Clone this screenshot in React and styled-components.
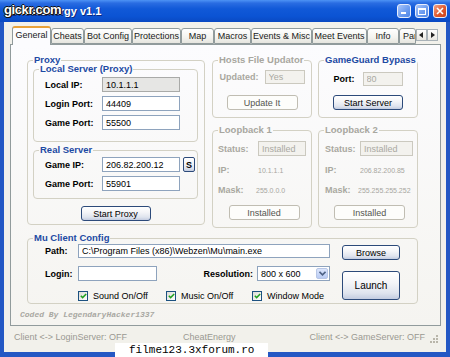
import styled, { createGlobalStyle } from "styled-components";

const GlobalStyle = createGlobalStyle`
  body { margin: 0; background: #fff; font-family: "Liberation Sans", Arial, sans-serif; }
`;

const tabs = [
  ["General", 39], ["Cheats", 33], ["Bot Config", 48], ["Protections", 49], ["Map", 33],
  ["Macros", 37], ["Events & Misc", 61], ["Meet Events", 55], ["Info", 32], ["Party", 17],
];

export default function App() {
  return (
    <Window>
      <GlobalStyle />
      <TitleBar>
        <TitleText>CheatEnergy v1.1</TitleText>
        <Controls>
          <CtlButton><MinBar /></CtlButton>
          <CtlButton><MaxBox /></CtlButton>
          <CtlButton $close>
            <svg width="8" height="8" viewBox="0 0 8 8"><path d="M1 1L7 7M7 1L1 7" stroke="#fff" strokeWidth="1.6" /></svg>
          </CtlButton>
        </Controls>
      </TitleBar>
      <SiteMark>gickr.com</SiteMark>

      <Body>
        <TabStrip>
          {tabs.map(([name, w], i) => (
            <Tab key={name} $w={w} $active={i === 0}>{name}</Tab>
          ))}
          <Arrows>
            <Arrow><svg width="5" height="6" viewBox="0 0 5 6"><path d="M4 0L0 3L4 6Z" fill="#222" /></svg></Arrow>
            <Arrow><svg width="5" height="6" viewBox="0 0 5 6"><path d="M1 0L5 3L1 6Z" fill="#222" /></svg></Arrow>
          </Arrows>
        </TabStrip>

        <Panel>
          <TopSection>
            <Group $w={178} $h={170}>
              <Legend>Proxy</Legend>
              <GroupBody $pad="0 6px 3px 5px">
                <Group $mt={-1}>
                  <Legend>Local Server (Proxy)</Legend>
                  <Rows $pad="3px 0 11px 11px" $gap={4}>
                    <Row><FieldLabel $w={57}>Local IP:</FieldLabel><TextBox $w={78} $read defaultValue="10.1.1.1" readOnly /></Row>
                    <Row><FieldLabel $w={57}>Login Port:</FieldLabel><TextBox $w={78} defaultValue="44409" readOnly /></Row>
                    <Row><FieldLabel $w={57}>Game Port:</FieldLabel><TextBox $w={78} defaultValue="55500" readOnly /></Row>
                  </Rows>
                </Group>
                <Group $mt={3}>
                  <Legend>Real Server</Legend>
                  <Rows $pad="2px 0 7px 11px" $gap={4}>
                    <Row>
                      <FieldLabel $w={57}>Game IP:</FieldLabel>
                      <TextBox $w={78} defaultValue="206.82.200.12" readOnly />
                      <SmallButton>S</SmallButton>
                    </Row>
                    <Row><FieldLabel $w={57}>Game Port:</FieldLabel><TextBox $w={78} defaultValue="55901" readOnly /></Row>
                  </Rows>
                </Group>
                <Center $mt={7}><Button $w={70}>Start Proxy</Button></Center>
              </GroupBody>
            </Group>

            <SideGrid>
              <Group $h={63}>
                <Legend $off>Hosts File Updator</Legend>
                <Rows $pad="4px 0 0 0" $center>
                  <Row>
                    <FieldLabel $w={45} $off>Updated:</FieldLabel>
                    <TextBox $w={40} $h={14} $off defaultValue="Yes" readOnly />
                  </Row>
                  <Button $w={71} $off $mt={11}>Update It</Button>
                </Rows>
              </Group>
              <Group $h={63}>
                <Legend>GameGuard Bypass</Legend>
                <Rows $pad="6px 0 0 0" $center>
                  <Row>
                    <FieldLabel $w={29}>Port:</FieldLabel>
                    <TextBox $w={40} $h={14} $off defaultValue="80" readOnly />
                  </Row>
                  <Button $w={70} $mt={9}>Start Server</Button>
                </Rows>
              </Group>
              <Loopback title="Loopback 1" pad={5} label={40} ip="10.1.1.1" mask="255.0.0.0" />
              <Loopback title="Loopback 2" pad={6} label={35} ip="206.82.200.85" mask="255.255.255.252" />
            </SideGrid>
          </TopSection>

          <Group $w={391} $h={71} $mt={5}>
            <Legend>Mu Client Config</Legend>
            <MuBody>
              <MuFields>
                <Row>
                  <FieldLabel $w={33}>Path:</FieldLabel>
                  <TextBox $w={252} $h={14} defaultValue={"C:\\Program Files (x86)\\Webzen\\Mu\\main.exe"} readOnly />
                </Row>
                <Row $mt={8}>
                  <FieldLabel $w={33}>Login:</FieldLabel>
                  <TextBox $w={79} defaultValue="" readOnly />
                  <ResLabel>Resolution:</ResLabel>
                  <Select>
                    <span>800 x 600</span>
                    <DropButton>
                      <svg width="7" height="5" viewBox="0 0 7 5"><path d="M0.5 0.8L3.5 3.8L6.5 0.8" stroke="#4d6185" strokeWidth="1.6" fill="none" /></svg>
                    </DropButton>
                  </Select>
                </Row>
                <CheckRow>
                  <Check $w={88}><Box><Tick /></Box>Sound On/Off</Check>
                  <Check $w={86}><Box><Tick /></Box>Music On/Off</Check>
                  <Check><Box><Tick /></Box>Window Mode</Check>
                </CheckRow>
              </MuFields>
              <MuButtons>
                <Button $w={58}>Browse</Button>
                <Button $w={58} $h={29} $big>Launch</Button>
              </MuButtons>
            </MuBody>
          </Group>

          <Credit>Coded By LegendaryHacker1337</Credit>
        </Panel>

        <StatusBar>
          <StatusText $w={169}>Client &lt;-&gt; LoginServer: OFF</StatusText>
          <StatusText>CheatEnergy</StatusText>
          <StatusText $right>Client &lt;-&gt; GameServer: OFF</StatusText>
          <Grip>
            <svg width="8" height="8" viewBox="0 0 8 8" fill="#b9b6aa">
              <rect x="6" y="0" width="2" height="2" /><rect x="6" y="3" width="2" height="2" />
              <rect x="3" y="3" width="2" height="2" /><rect x="6" y="6" width="2" height="2" />
              <rect x="3" y="6" width="2" height="2" /><rect x="0" y="6" width="2" height="2" />
            </svg>
          </Grip>
        </StatusBar>
      </Body>
      <ForumMark>filme123.3xforum.ro</ForumMark>
    </Window>
  );
}

function Loopback({ title, pad, label, ip, mask }) {
  return (
    <Group $h={103}>
      <Legend $off>{title}</Legend>
      <Rows $pad={`6px 0 0 ${pad}px`}>
        <Row><FieldLabel $w={label} $off>Status:</FieldLabel><TextBox $w={label === 40 ? 48 : 53} $off defaultValue="Installed" readOnly /></Row>
        <Row $mt={7} $h={14}><FieldLabel $w={label} $off>IP:</FieldLabel><Value>{ip}</Value></Row>
        <Row $mt={6} $h={14}><FieldLabel $w={label - 2} $off>Mask:</FieldLabel><Value>{mask}</Value></Row>
        <Center $mt={8} $shift={pad === 5 ? -1 : -3}><Button $w={71} $off>Installed</Button></Center>
      </Rows>
    </Group>
  );
}

const Window = styled.div`
  position: relative;
  width: 450px;
  height: 357px;
  overflow: hidden;
  display: flex;
  flex-direction: column;
  background: #2458c4;
  font-family: "Liberation Sans", Arial, sans-serif;
  font-size: 9px;
`;

const TitleBar = styled.div`
  height: 22px;
  flex: none;
  display: flex;
  align-items: center;
  justify-content: space-between;
  padding: 0 3px 0 9px;
  background: linear-gradient(#4d93f5 0%, #2a6ce2 14%, #1159d8 40%, #0b53d3 75%, #0a49c2 100%);
`;

const TitleText = styled.span`
  color: #fff;
  font-weight: bold;
  font-size: 11px;
  text-shadow: 1px 1px 0 #0c2a80;
`;

const SiteMark = styled.div`
  position: absolute;
  left: 4px;
  top: 2px;
  color: #fff;
  font-weight: bold;
  font-size: 13px;
  letter-spacing: -0.4px;
  text-shadow: -1px 0 #111, 1px 0 #111, 0 -1px #111, 0 1px #111, 1px 1px #111;
`;

const Controls = styled.div`
  display: flex;
  gap: 4px;
`;

const CtlButton = styled.div`
  position: relative;
  box-sizing: border-box;
  width: 14px;
  height: 14px;
  border: 1px solid #e8eefc;
  border-radius: 3px;
  display: flex;
  align-items: center;
  justify-content: center;
  background: ${(p) => (p.$close
    ? "linear-gradient(135deg, #f3a489, #e0592f 55%, #c8431b)"
    : "linear-gradient(135deg, #a9c6fa, #6e9df0 55%, #4f86e6)")};
`;

const MinBar = styled.div`
  position: absolute;
  left: 3px;
  bottom: 3px;
  width: 5px;
  height: 2px;
  background: #fff;
`;

const MaxBox = styled.div`
  box-sizing: border-box;
  width: 8px;
  height: 7px;
  border: 1px solid #fff;
  border-top-width: 2px;
`;

const Body = styled.div`
  height: 330px;
  flex: none;
  box-sizing: border-box;
  margin: 0 4px;
  padding: 4px 5px 0 6px;
  background: #f2f1eb;
  display: flex;
  flex-direction: column;
`;

const TabStrip = styled.div`
  position: relative;
  z-index: 2;
  height: 18px;
  flex: none;
  display: flex;
  align-items: flex-end;
  padding-left: 2px;
`;

const Tab = styled.div`
  box-sizing: border-box;
  width: ${(p) => p.$w}px;
  height: ${(p) => (p.$active ? 19 : 16)}px;
  margin-bottom: ${(p) => (p.$active ? -1 : 0)}px;
  flex: none;
  overflow: hidden;
  white-space: nowrap;
  padding-left: ${(p) => (p.$w < 20 ? 3 : 0)}px;
  text-align: ${(p) => (p.$w < 20 ? "left" : "center")};
  line-height: ${(p) => (p.$active ? 15 : 14)}px;
  font-size: 9px;
  color: #1a1a1a;
  border: 1px solid #919b9c;
  border-bottom: ${(p) => (p.$active ? "none" : "1px solid #919b9c")};
  border-top: ${(p) => (p.$active ? "2px solid #e8a23a" : "1px solid #919b9c")};
  border-radius: 3px 3px 0 0;
  background: ${(p) => (p.$active ? "#fcfcfe" : "linear-gradient(#ffffff, #f3f3ef 60%, #e6e5df)")};
`;

const Arrows = styled.div`
  display: flex;
  align-self: flex-start;
  margin: 3px 0 0 0;
`;

const Arrow = styled.div`
  box-sizing: border-box;
  width: 11px;
  height: 12px;
  border: 1px solid #a9b2b8;
  background: linear-gradient(#ffffff, #e8e7e1);
  display: flex;
  align-items: center;
  justify-content: center;
`;

const Panel = styled.div`
  height: 282px;
  flex: none;
  box-sizing: border-box;
  padding: 10px 0 0 16px;
  border: 1px solid #919b9c;
  background: linear-gradient(#fcfcfe, #f5f4f0);
`;

const TopSection = styled.div`
  display: flex;
  align-items: flex-start;
  gap: 7px;
`;

const SideGrid = styled.div`
  display: grid;
  grid-template-columns: 100px 100px;
  grid-template-rows: 63px 103px;
  gap: 7px 6px;
`;

const Group = styled.fieldset`
  box-sizing: border-box;
  margin: ${(p) => p.$mt || 0}px 0 0 0;
  padding: 0;
  min-width: 0;
  width: ${(p) => (p.$w ? `${p.$w}px` : "auto")};
  height: ${(p) => (p.$h ? `${p.$h}px` : "auto")};
  border: 1px solid #d3d1c4;
  border-radius: 4px;
`;

const Legend = styled.legend`
  margin-left: 5px;
  padding: 0 1px;
  font-size: 9.5px;
  font-weight: bold;
  line-height: 10px;
  color: ${(p) => (p.$off ? "#a8a79f" : "#1d4aa3")};
`;

const GroupBody = styled.div`
  padding: ${(p) => p.$pad};
`;

const Rows = styled.div`
  display: flex;
  flex-direction: column;
  align-items: ${(p) => (p.$center ? "center" : "stretch")};
  gap: ${(p) => p.$gap || 0}px;
  padding: ${(p) => p.$pad};
`;

const Row = styled.div`
  display: flex;
  align-items: center;
  height: ${(p) => p.$h || 15}px;
  margin-top: ${(p) => p.$mt || 0}px;
`;

const Center = styled.div`
  display: flex;
  justify-content: center;
  margin-top: ${(p) => p.$mt || 0}px;
  margin-left: ${(p) => p.$shift || 0}px;
`;

const FieldLabel = styled.span`
  width: ${(p) => p.$w}px;
  flex: none;
  font-weight: bold;
  font-size: 9px;
  white-space: nowrap;
  color: ${(p) => (p.$off ? "#a9a8a0" : "#000")};
`;

const TextBox = styled.input`
  box-sizing: border-box;
  width: ${(p) => p.$w}px;
  height: ${(p) => p.$h || 15}px;
  margin: 0;
  padding: 0 3px;
  outline: none;
  font: 9px "Liberation Sans", Arial, sans-serif;
  border: 1px solid ${(p) => (p.$off ? "#cbc9bf" : p.$read ? "#a9aaa8" : "#8ea3bd")};
  background: ${(p) => (p.$off ? "#f3f2ee" : p.$read ? "#e6e6e4" : "#fff")};
  color: ${(p) => (p.$off ? "#aaa9a2" : "#000")};
`;

const Value = styled.span`
  font-size: 7px;
  color: #a7a6a0;
  white-space: nowrap;
`;

const Button = styled.button`
  box-sizing: border-box;
  width: ${(p) => p.$w}px;
  height: ${(p) => p.$h || 15}px;
  margin: ${(p) => p.$mt || 0}px 0 0 0;
  padding: 0;
  flex: none;
  font: ${(p) => (p.$big ? 10 : 9)}px "Liberation Sans", Arial, sans-serif;
  border-radius: 3px;
  border: 1px solid ${(p) => (p.$off ? "#c0bdb2" : "#2c4a7a")};
  background: ${(p) => (p.$off
    ? "#fdfdfb"
    : "linear-gradient(#ffffff, #f4f5f8 40%, #dfe4ee 78%, #c3cce0)")};
  color: ${(p) => (p.$off ? "#55554f" : "#000")};
`;

const SmallButton = styled(Button)`
  width: 12px;
  margin-left: 3px;
  font-weight: bold;
  font-size: 9px;
  border-radius: 2px;
`;

const MuBody = styled.div`
  display: flex;
  align-items: flex-start;
  padding: 0 17px 3px 17px;
`;

const MuFields = styled.div`
  display: flex;
  flex-direction: column;
  width: 285px;
`;

const ResLabel = styled.span`
  flex: 1;
  text-align: right;
  padding-right: 4px;
  font-weight: bold;
  font-size: 9px;
`;

const Select = styled.div`
  box-sizing: border-box;
  width: 73px;
  height: 15px;
  display: flex;
  align-items: center;
  justify-content: space-between;
  padding: 0 1px 0 3px;
  border: 1px solid #8ea3bd;
  background: #fff;
  font-size: 9px;
`;

const DropButton = styled.div`
  box-sizing: border-box;
  width: 12px;
  height: 11px;
  display: flex;
  align-items: center;
  justify-content: center;
  border: 1px solid #b7c6e6;
  border-radius: 2px;
  background: linear-gradient(#dbe5fb, #b9cbf3);
`;

const CheckRow = styled.div`
  display: flex;
  align-items: center;
  height: 10px;
  margin-top: 10px;
  padding-left: 33px;
`;

const Check = styled.div`
  display: flex;
  align-items: center;
  gap: 5px;
  width: ${(p) => (p.$w ? `${p.$w}px` : "auto")};
  font-size: 9px;
  white-space: nowrap;
`;

const Box = styled.div`
  box-sizing: border-box;
  width: 10px;
  height: 10px;
  border: 1px solid #1c5180;
  background: linear-gradient(135deg, #dcdcd6, #fff);
  display: flex;
  align-items: center;
  justify-content: center;
`;

function Tick() {
  return (
    <svg width="7" height="6" viewBox="0 0 7 6">
      <path d="M0.8 2.8L2.6 4.6L6.2 0.9" stroke="#21a121" strokeWidth="1.5" fill="none" />
    </svg>
  );
}

const MuButtons = styled.div`
  display: flex;
  flex-direction: column;
  gap: 11px;
  margin: 2px 0 0 12px;
`;

const Credit = styled.div`
  margin: 6px 0 0 -7px;
  line-height: 10px;
  font: italic bold 8px "Liberation Mono", "Courier New", monospace;
  color: #a9a8a2;
`;

const StatusBar = styled.div`
  flex: 1;
  display: flex;
  align-items: center;
  padding: 0 3px 4px 4px;
`;

const StatusText = styled.span`
  width: ${(p) => (p.$w ? `${p.$w}px` : "auto")};
  margin-left: ${(p) => (p.$right ? "auto" : "0")};
  font-size: 9px;
  color: #9a9992;
  white-space: nowrap;
`;

const Grip = styled.div`
  width: 8px;
  height: 8px;
  margin: 4px 0 0 5px;
  display: flex;
`;

const ForumMark = styled.div`
  position: absolute;
  left: 115px;
  top: 343px;
  width: 153px;
  height: 14px;
  box-sizing: border-box;
  padding-left: 14px;
  background: #fff;
  color: #000;
  font: 11px/14px "Liberation Mono", "Courier New", monospace;
  white-space: nowrap;
`;
